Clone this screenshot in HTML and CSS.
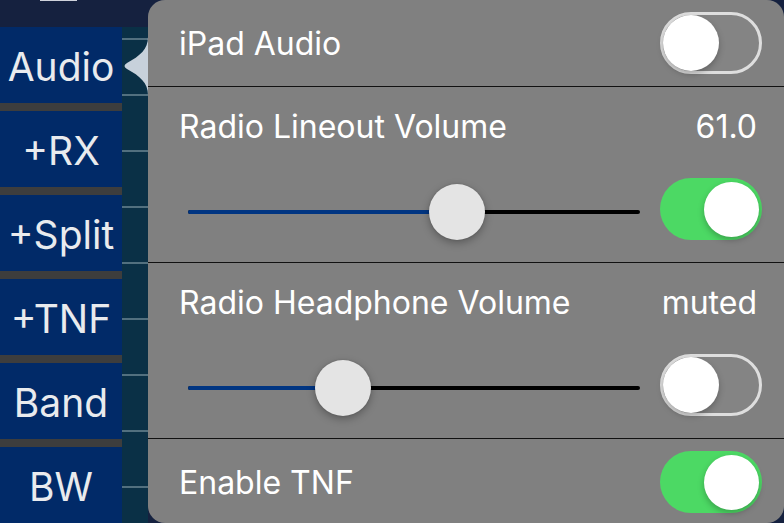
FILE: index.html
```html
<!DOCTYPE html>
<html>
<head>
<meta charset="utf-8">
<link rel="stylesheet" href="styles.css">
</head>
<body>
<div class="screen">
  <div class="left">
    <div class="topbar"><span class="topmark"></span></div>
    <div class="lower">
      <div class="menu">
        <div class="btn">Audio</div>
        <div class="sep"></div>
        <div class="btn">+RX</div>
        <div class="sep"></div>
        <div class="btn">+Split</div>
        <div class="sep"></div>
        <div class="btn">+TNF</div>
        <div class="sep"></div>
        <div class="btn">Band</div>
        <div class="sep"></div>
        <div class="btn">BW</div>
      </div>
      <div class="strip"></div>
    </div>
  </div>
  <div class="panel">
    <svg class="arrow" width="26" height="58" viewBox="0 0 26 58"><path d="M26 0 C26 12 18 19 5 26 Q0 29 5 32 C18 39 26 46 26 58 Z" fill="#c7d1db"/></svg>
    <div class="row short">
      <span class="label">iPad Audio</span>
      <span class="switch off"><span class="knob"></span></span>
    </div>
    <div class="row tall">
      <div class="line"><span class="label">Radio Lineout Volume</span><span class="value">61.0</span></div>
      <div class="controls">
        <div class="slider"><div class="fill" style="width:59.5%"></div><div class="thumb" style="left:59.5%"></div></div>
        <span class="switch on"><span class="knob"></span></span>
      </div>
    </div>
    <div class="row tall">
      <div class="line"><span class="label">Radio Headphone Volume</span><span class="value">muted</span></div>
      <div class="controls">
        <div class="slider"><div class="fill" style="width:34.3%"></div><div class="thumb" style="left:34.3%"></div></div>
        <span class="switch off"><span class="knob"></span></span>
      </div>
    </div>
    <div class="row short last">
      <span class="label">Enable TNF</span>
      <span class="switch on"><span class="knob"></span></span>
    </div>
  </div>
</div>
</body>
</html>
```
FILE: styles.css
```css
html, body {
  margin: 0;
  padding: 0;
  width: 784px;
  height: 523px;
  overflow: hidden;
  background: #15213f;
  font-family: Inter, "Open Sans", "Liberation Sans", sans-serif;
}
.screen {
  display: flex;
  width: 784px;
  height: 523px;
}
.left {
  width: 148px;
  display: flex;
  flex-direction: column;
  flex-shrink: 0;
}
.topbar {
  height: 27px;
  background: #15213f;
  position: relative;
}
.topmark {
  position: absolute;
  left: 40px;
  top: 0;
  width: 37px;
  height: 1px;
  background: #cfd3dc;
}
.lower {
  flex: 1;
  display: flex;
}
.menu {
  width: 122px;
  display: flex;
  flex-direction: column;
}
.btn {
  height: 76px;
  background: #012a68;
  color: #e9ebee;
  font-size: 39px;
  display: flex;
  align-items: center;
  justify-content: center;
  padding-top: 2px;
  box-sizing: border-box;
}
.sep {
  height: 8px;
  background: #3d3d3d;
}
.strip {
  width: 26px;
  background-color: #0a3046;
  background-image: repeating-linear-gradient(to bottom, transparent 0, transparent 11px, #52707f 11px, #52707f 13px, transparent 13px, transparent 56px);
}
.panel {
  position: relative;
  flex: 1;
  background: #808080;
  border-radius: 17px;
  color: #ffffff;
}
.arrow {
  position: absolute;
  left: -26px;
  top: 37px;
}
.row {
  border-bottom: 1px solid #111;
  padding: 0 22px 0 31px;
}
.row.last {
  border-bottom: none;
}
.short {
  height: 86px;
  display: flex;
  align-items: center;
  justify-content: space-between;
}
.tall {
  height: 175px;
  display: flex;
  flex-direction: column;
}
.label, .value {
  font-size: 32px;
}
.line {
  height: 78px;
  display: flex;
  align-items: center;
  justify-content: space-between;
  padding-right: 5px;
}
.controls {
  margin-top: 13px;
  height: 62px;
  display: flex;
  align-items: center;
  gap: 20px;
  padding-left: 9px;
}
.slider {
  position: relative;
  flex: 1;
  height: 4px;
  margin-top: 6px;
  background: #000;
  border-radius: 2px;
}
.fill {
  position: absolute;
  left: 0;
  top: 0;
  bottom: 0;
  background: #003582;
  border-radius: 2px;
}
.thumb {
  position: absolute;
  top: 50%;
  width: 56px;
  height: 56px;
  margin: -28px 0 0 -28px;
  border-radius: 50%;
  background: #e4e4e4;
  box-shadow: 0 3px 8px rgba(0,0,0,0.3), 0 0 2px rgba(0,0,0,0.15);
}
.switch {
  width: 102px;
  height: 62px;
  box-sizing: border-box;
  border-radius: 31px;
  flex-shrink: 0;
  display: flex;
  align-items: center;
  padding: 3px;
}
.switch.off {
  border: 3px solid #dedede;
  padding: 0;
  background: #848484;
}
.switch.on {
  background: #4cd964;
  justify-content: flex-end;
}
.knob {
  width: 56px;
  height: 56px;
  border-radius: 50%;
  background: #fff;
  box-shadow: 0 3px 6px rgba(0,0,0,0.25);
}
.switch.on .knob {
  width: 55px;
  height: 55px;
}
```
